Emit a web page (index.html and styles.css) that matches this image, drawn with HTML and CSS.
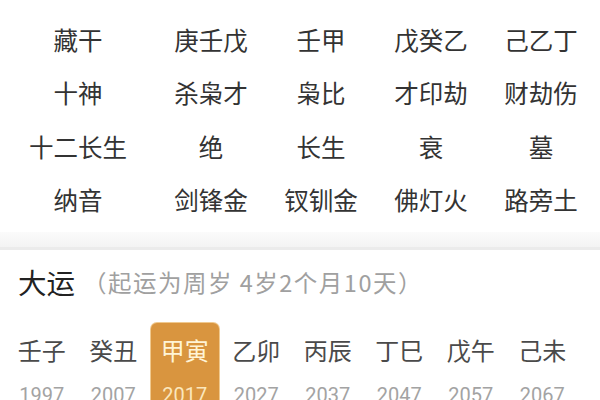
FILE: index.html
```html
<!DOCTYPE html>
<html lang="zh">
<head>
<meta charset="utf-8">
<link rel="stylesheet" href="styles.css">
</head>
<body>
<div class="pillars">
  <div class="row"><div class="label">藏干</div><div>庚壬戊</div><div>壬甲</div><div>戊癸乙</div><div>己乙丁</div></div>
  <div class="row"><div class="label">十神</div><div>杀枭才</div><div>枭比</div><div>才印劫</div><div>财劫伤</div></div>
  <div class="row"><div class="label">十二长生</div><div>绝</div><div>长生</div><div>衰</div><div>墓</div></div>
  <div class="row"><div class="label">纳音</div><div>剑锋金</div><div>钗钏金</div><div>佛灯火</div><div>路旁土</div></div>
</div>
<div class="divider"></div>
<div class="dayun">
  <div class="title"><span class="big">大运</span><span class="sub">（起运为周岁 4岁2个月10天）</span></div>
  <div class="luck">
    <div class="cell"><div class="gz">壬子</div><div class="yr">1997</div></div>
    <div class="cell"><div class="gz">癸丑</div><div class="yr">2007</div></div>
    <div class="cell active"><div class="gz">甲寅</div><div class="yr">2017</div></div>
    <div class="cell"><div class="gz">乙卯</div><div class="yr">2027</div></div>
    <div class="cell"><div class="gz">丙辰</div><div class="yr">2037</div></div>
    <div class="cell"><div class="gz">丁巳</div><div class="yr">2047</div></div>
    <div class="cell"><div class="gz">戊午</div><div class="yr">2057</div></div>
    <div class="cell"><div class="gz">己未</div><div class="yr">2067</div></div>
  </div>
</div>
</body>
</html>
```
FILE: styles.css
```css
html, body {
  margin: 0;
  padding: 0;
  background: #ffffff;
  overflow: hidden;
  width: 600px;
  height: 400px;
}
body {
  font-family: "Noto Sans CJK SC", "Noto Sans", sans-serif;
  color: #333333;
}
.pillars {
  padding-top: 13px;
}
.row {
  display: grid;
  grid-template-columns: 156px repeat(4, 110px);
  height: 53.5px;
  align-items: center;
  font-size: 24.5px;
  line-height: 30px;
}
.row > div {
  text-align: center;
  white-space: nowrap;
}
.divider {
  margin-top: 5px;
  height: 15px;
  background: linear-gradient(#fbfbfb, #f3f3f3);
  border-bottom: 3px solid #ebebeb;
}
.title {
  display: flex;
  align-items: center;
  padding: 14px 0 0 18px;
  height: 36px;
}
.big {
  font-size: 28.5px;
  color: #222222;
  line-height: 36px;
}
.sub {
  font-size: 23.5px;
  letter-spacing: 1.5px;
  color: #a0a0a0;
  margin-left: 8px;
  line-height: 36px;
  white-space: nowrap;
}
.luck {
  display: grid;
  grid-template-columns: repeat(8, 71.5px);
  padding-left: 6px;
  margin-top: 23px;
}
.cell {
  display: flex;
  flex-direction: column;
  align-items: center;
  width: 68px;
  justify-self: center;
  padding-top: 12px;
  border-radius: 6px;
  height: 100px;
}
.gz {
  font-size: 24px;
  line-height: 30px;
  color: #4a4a4a;
}
.yr {
  margin-top: 16px;
  font-family: "Roboto", "Noto Sans", sans-serif;
  font-size: 20px;
  line-height: 28px;
  color: #a3a3a3;
}
.active {
  background: #d9953f;
  box-shadow: 0 0 0 1px #f0c98f;
}
.active .gz {
  color: #fff4d6;
}
.active .yr {
  color: #fbe7bd;
}
```
